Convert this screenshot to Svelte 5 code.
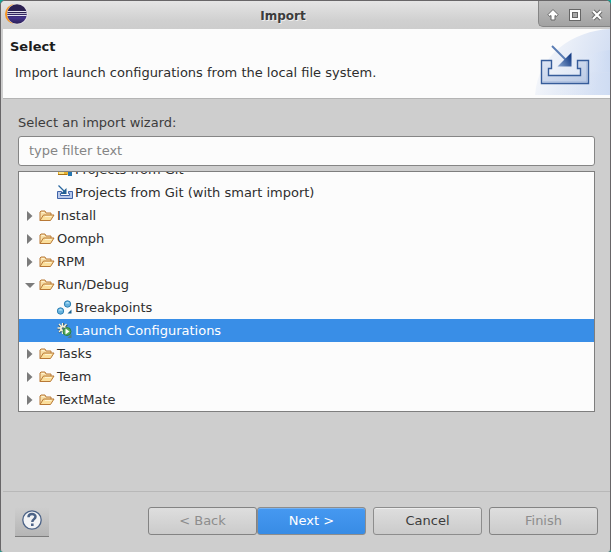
<script>
  const rows = [
    { label: 'Projects from Git', icon: 'git', level: 2 },
    { label: 'Projects from Git (with smart import)', icon: 'import', level: 2 },
    { label: 'Install', icon: 'folder', level: 1 },
    { label: 'Oomph', icon: 'folder', level: 1 },
    { label: 'RPM', icon: 'folder', level: 1 },
    { label: 'Run/Debug', icon: 'folder', level: 1, open: true },
    { label: 'Breakpoints', icon: 'breakpoints', level: 2 },
    { label: 'Launch Configurations', icon: 'launch', level: 2 },
    { label: 'Tasks', icon: 'folder', level: 1 },
    { label: 'Team', icon: 'folder', level: 1 },
    { label: 'TextMate', icon: 'folder', level: 1 }
  ];
  let selected = $state('Launch Configurations');
  let filter = $state('');
</script>

<div class="desktop">
  <div class="window">
    <header class="titlebar">
      <svg class="logo" width="24" height="22" viewBox="0 0 24 22" aria-hidden="true">
        <defs>
          <linearGradient id="orb" x1="0" y1="0" x2="0" y2="1">
            <stop offset="0" stop-color="#2b2050" />
            <stop offset="0.45" stop-color="#2b2052" />
            <stop offset="0.7" stop-color="#45348c" />
            <stop offset="1" stop-color="#2a2056" />
          </linearGradient>
          <clipPath id="disc"><circle cx="13" cy="11" r="10" /></clipPath>
        </defs>
        <circle cx="11" cy="11" r="10" fill="#f7941e" />
        <circle cx="13.500" cy="11" r="10.500" fill="#e3dfe4" />
        <circle cx="13" cy="11" r="9.800" fill="url(#orb)" />
        <g clip-path="url(#disc)" fill="#e6e4f0">
          <rect x="2" y="8" width="22" height="1" />
          <rect x="2" y="10" width="22" height="1" opacity="0.8" />
          <rect x="2" y="12" width="22" height="1" />
        </g>
      </svg>
      <h1>Import</h1>
      <div class="controls">
        <button aria-label="Shade"><svg width="12" height="12" viewBox="0 0 12 12"><path d="M6 .5L11 5.500L9.500 7.500L8 6.500V11H4V6.500L2.500 7.500L1 5.500Z" fill="#fff" stroke="#666" /><path d="M4 5.500H8" stroke="#fff" /></svg></button>
        <button aria-label="Maximize"><svg width="12" height="12" viewBox="0 0 12 12"><rect x="1.500" y="1.500" width="9" height="9" fill="none" stroke="#666" stroke-width="3" /><rect x="2" y="2" width="8" height="8" fill="none" stroke="#fff" stroke-width="2" /><rect x="3.500" y="3.500" width="5" height="5" fill="#aaa" stroke="#666" /></svg></button>
        <button aria-label="Close"><svg width="12" height="12" viewBox="0 0 12 12"><path d="M2 2L10 10M10 2L2 10" stroke="#666" stroke-width="4" /><path d="M2 2L10 10M10 2L2 10" stroke="#fff" stroke-width="2.200" /></svg></button>
      </div>
    </header>

    <section class="banner">
      <div class="intro">
        <h2>Select</h2>
        <p>Import launch configurations from the local file system.</p>
      </div>
      <svg class="art" width="75" height="66" viewBox="0 0 75 66" aria-hidden="true">
        <defs>
          <linearGradient id="sky" x1="0" y1="0" x2="1" y2="0.3">
            <stop offset="0" stop-color="#fcfcfc" />
            <stop offset="1" stop-color="#d4dff3" />
          </linearGradient>
          <linearGradient id="wave" x1="0" y1="0" x2="1" y2="0">
            <stop offset="0" stop-color="#f8faff" stop-opacity="0" />
            <stop offset="1" stop-color="#c8d8f2" />
          </linearGradient>
          <linearGradient id="tray" x1="0" y1="0" x2="1" y2="1">
            <stop offset="0" stop-color="#dfe6f4" />
            <stop offset="1" stop-color="#b8c8e4" />
          </linearGradient>
          <linearGradient id="tip" x1="0" y1="1" x2="1" y2="0.4">
            <stop offset="0" stop-color="#8ba8d2" />
            <stop offset="1" stop-color="#183f87" />
          </linearGradient>
        </defs>
        <path d="M0 66C3 25 38 2 75 0V66Z" fill="url(#sky)" />
        <path d="M32 44C44 30 58 22 75 21V43Z" fill="url(#wave)" opacity="0.600" />
        <path d="M20 66C42 48 58 45 75 43V66Z" fill="url(#wave)" opacity="0.450" />
        <path d="M6.500 31.500H16.500V39.500H13.500V46.500H45.500V39.500H42.500V31.500H53.500V54.500H6.500Z" fill="url(#tray)" stroke="#365c9a" stroke-width="1.400" />
        <path d="M8 53H52M52 33V53" stroke="#9fb4d8" fill="none" />
        <path d="M17 17L31 31" stroke="#5a7db4" stroke-width="2" />
        <path d="M36.500 23.500V37.500H22.500Z" fill="url(#tip)" />
      </svg>
    </section>

    <main>
      <label for="filter">Select an import wizard:</label>
      <input id="filter" type="text" placeholder="type filter text" bind:value={filter} />
      <ul class="tree" aria-label="Import wizards">
        {#each rows as row}
          <li>
            <button class="row" class:child={row.level === 2} class:selected={selected === row.label} onclick={() => (selected = row.label)}>
              {#if row.level === 1}
                <svg class="arrow" width="10" height="12" viewBox="0 0 10 12" aria-hidden="true">
                  {#if row.open}<path d="M0 4H10L5 9Z" fill="#7b7b7b" />{:else}<path d="M2 1L7.500 6L2 11Z" fill="#7b7b7b" />{/if}
                </svg>
              {/if}
              <svg class="icon" width="16" height="16" viewBox="0 0 16 16" aria-hidden="true">
                {#if row.icon === 'folder'}
                  <path d="M1 12.500V4L2 3H6L7 5H12V7" fill="#f8dfa8" stroke="#b87936" />
                  <path d="M1 12.500L4.500 7H15L11.500 12.500Z" fill="#fbdf9c" stroke="#b87936" />
                  <path d="M2.500 4.500H5.500M6 8.500H12.500" stroke="#fff3d0" />
                {:else if row.icon === 'import'}
                  <path d="M.5 6.500H4.500V8.500H3.500V10.500H12.500V8.500H11.500V6.500H15.500V13.500H.5Z" fill="#b9c9ea" stroke="#3f63a8" />
                  <path d="M1.500 .5L7 6" stroke="#29679f" stroke-width="1.300" />
                  <path d="M9.500 3V9H3.500Z" fill="#246094" />
                {:else if row.icon === 'git'}
                  <path d="M1 3H7V6H14V13H1Z" fill="#eab531" />
                  <path d="M2 9H7V12H2Z" fill="#fbe48c" />
                  <path d="M1 12.500H10" stroke="#a86f12" />
                  <path d="M11 9H15V14H11Z" fill="#2676b0" />
                {:else if row.icon === 'breakpoints'}
                  <circle cx="10.500" cy="4" r="3.200" fill="#65b2df" stroke="#3282b4" />
                  <circle cx="3.500" cy="11" r="3.200" fill="#65b2df" stroke="#3282b4" />
                  <path d="M8.500 3.500A2 1.500 0 0 1 12.500 3.500M1.500 10.500A2 1.500 0 0 1 5.500 10.500" fill="#b9e4f7" />
                  <path d="M14.500 9.500V13.500H10.500Z" fill="#1c6291" />
                {:else}
                  <path d="M6 0V11M.5 5.500H11.500M2 1.500L10 9.500M10 1.500L2 9.500" stroke="#344e58" stroke-width="2.200" />
                  <path d="M5.500 0V11M.5 5H11.500M2 1L9.500 9M9.500 1L2 9" stroke="#f7f4df" stroke-width="1.300" />
                  <circle cx="6" cy="5.500" r="3" fill="#f3efd6" />
                  <circle cx="6" cy="5.500" r="1.200" fill="#52717d" />
                  <circle cx="10" cy="8.500" r="4" fill="#55a957" stroke="#2e7d46" />
                  <path d="M8.500 5.500L12.500 8.500L8.500 11.500Z" fill="#fff" />
                  <path d="M14.500 11V15H10.500Z" fill="#547f83" />
                {/if}
              </svg>
              <span>{row.label}</span>
            </button>
          </li>
        {/each}
      </ul>
    </main>

    <footer>
      <button class="help" aria-label="Help">
        <svg width="20" height="20" viewBox="0 0 20 20" aria-hidden="true">
          <circle cx="10" cy="10" r="9.200" fill="#f2f3f5" stroke="#4c6387" stroke-width="1.300" />
          <path d="M6.500 7.200C6.500 3.100 13.500 3.100 13.500 6.800C13.500 9.300 10.300 9 10.300 12" fill="none" stroke="#4c6387" stroke-width="2.500" />
          <path d="M9 13.500H11.600V16H9Z" fill="#4c6387" />
        </svg>
      </button>
      <div class="actions">
        <div class="pair">
          <button class="btn" disabled>&lt; Back</button>
          <button class="btn primary">Next &gt;</button>
        </div>
        <button class="btn">Cancel</button>
        <button class="btn" disabled>Finish</button>
      </div>
    </footer>
  </div>
</div>

<style>
  * { box-sizing: border-box; }
  button, input { font: inherit; color: inherit; }
  .desktop {
    min-height: 100vh;
    display: flex;
    background: #10a898;
    font: 13px/23px "DejaVu Sans", sans-serif;
    color: #2e2e2e;
  }
  .window {
    flex: 1;
    min-width: 0;
    display: flex;
    flex-direction: column;
    background: #cecece;
    border: 1px solid #686668;
    border-bottom: 0;
    border-radius: 5px 5px 3px 3px;
    overflow: hidden;
  }
  .titlebar {
    height: 28px;
    display: flex;
    align-items: flex-start;
    background: linear-gradient(#e5e5e5, #d0d0d0 70%, #cdcdcd);
  }
  .logo { margin: 2px 0 0 3px; }
  h1 {
    flex: 1;
    margin: 0;
    text-align: center;
    font-size: 12px;
    line-height: 30px;
    color: #3c3c3c;
    text-shadow: 1px 1px #eee;
  }
  .controls {
    display: flex;
    align-items: center;
    gap: 10px;
    height: 26px;
    padding: 2px 7px 0 8px;
    border: 1px solid #858585;
    border-width: 0 0 1px 1px;
    border-radius: 0 0 0 5px;
    background: linear-gradient(#bdbdbd, #a2a2a2);
  }
  .controls button {
    display: flex;
    padding: 0;
    border: 0;
    background: none;
  }
  .banner {
    height: 70px;
    margin-left: 2px;
    display: flex;
    justify-content: space-between;
    background: #fcfcfc;
    border-bottom: 1px solid #b4b4b4;
  }
  .intro { padding: 6px 0 0 7px; }
  h2 {
    margin: 0;
    font-size: 13px;
    line-height: 23px;
    color: #1c1c1c;
  }
  .intro p { margin: 3px 0 0 5px; }
  main {
    flex: 1;
    display: flex;
    flex-direction: column;
    padding: 12px 15px 0 17px;
  }
  label { color: #3c3c3c; }
  input {
    width: 100%;
    height: 30px;
    margin: 2px 0 5px;
    padding: 0 10px 2px;
    border: 1px solid #858585;
    border-radius: 3px;
    background: #fcfcfc;
  }
  input::placeholder { color: #858585; opacity: 1; }
  .tree {
    margin: 0;
    padding: 0;
    list-style: none;
    border: 1px solid #7e7e7e;
    background: #fcfcfc;
    overflow: hidden;
  }
  .tree li:first-child { margin-top: -14px; }
  .row {
    width: 100%;
    height: 23px;
    display: flex;
    align-items: center;
    padding: 0 0 0 6px;
    border: 0;
    background: none;
    text-align: left;
    white-space: nowrap;
  }
  .row.child { padding-left: 38px; }
  .row.selected { background: #398ee7; color: #fff; }
  .arrow { margin-right: 4px; }
  .icon { margin-right: 2px; }
  footer {
    height: 61px;
    margin-left: 2px;
    padding: 15px 12px 0;
    display: flex;
    justify-content: space-between;
    border-top: 1px solid #b8b8b8;
  }
  .help {
    width: 34px;
    height: 30px;
    padding: 0 0 4px;
    display: flex;
    align-items: center;
    justify-content: center;
    border: 0;
    border-bottom: 1px solid #7c7c7c;
    background: linear-gradient(#cecece, #b5b5b5);
  }
  .actions { display: flex; gap: 7px; }
  .pair { display: flex; }
  .btn {
    width: 109px;
    height: 28px;
    padding: 0 0 2px;
    border: 1px solid #8d8d8d;
    border-radius: 3px;
    background: linear-gradient(#dedede, #cbcbcb);
    box-shadow: inset 0 1px #ededed;
    color: #3c3c3c;
  }
  .btn:disabled {
    border-color: #838383;
    box-shadow: none;
    color: #8d8d8d;
  }
  .btn.primary {
    background: linear-gradient(#4699f1, #388ce5);
    box-shadow: inset 0 1px #74b2f4;
    color: #fff;
  }
</style>
